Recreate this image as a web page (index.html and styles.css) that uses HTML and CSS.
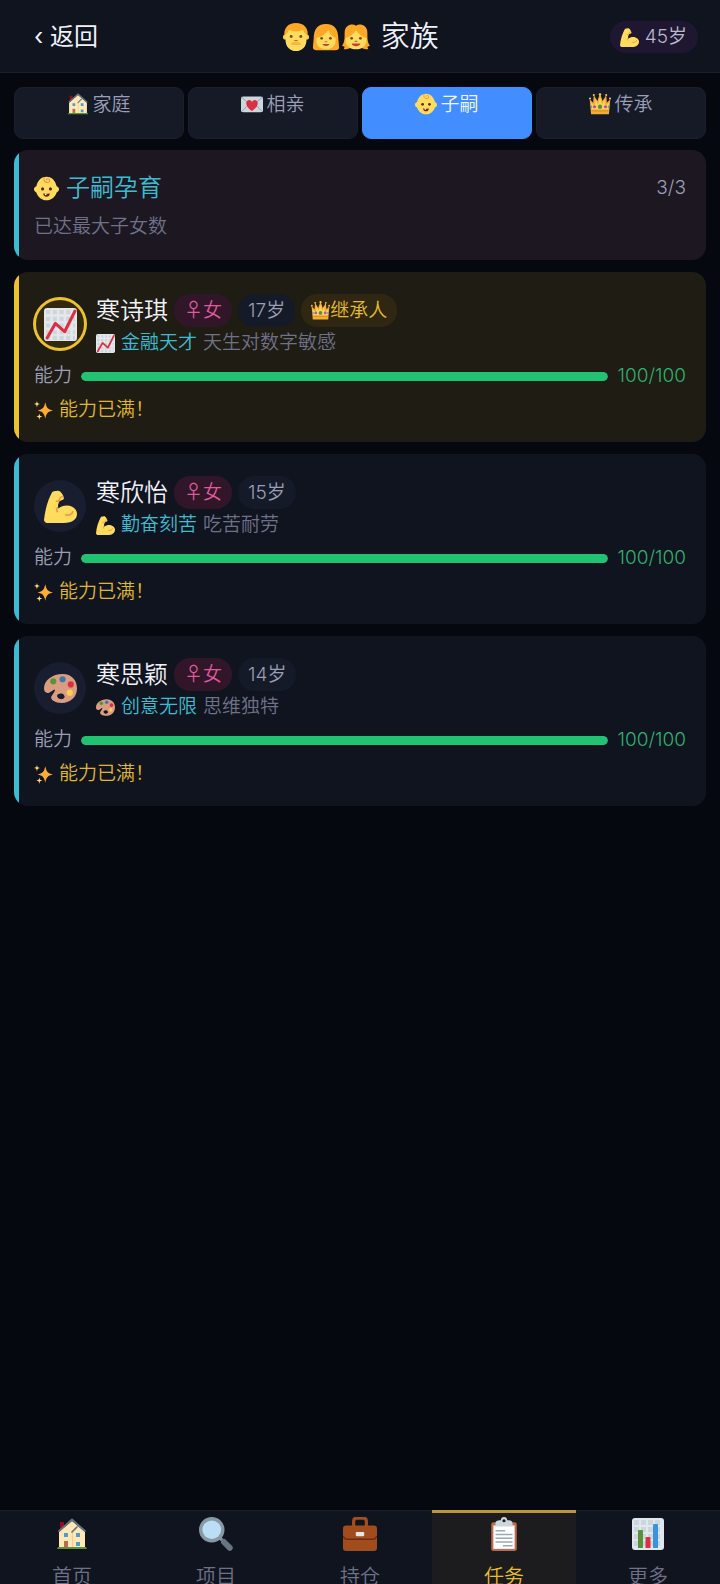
FILE: index.html
```html
<!DOCTYPE html>
<html lang="zh-CN">
<head>
<meta charset="utf-8">
<meta name="viewport" content="width=device-width, initial-scale=1">
<title>家族</title>
<link rel="stylesheet" href="styles.css">
</head>
<body>
<svg class="sprite" aria-hidden="true">
  <symbol id="man" viewBox="0 0 32 32">
    <path fill="#ffa726" d="M3 16C1 6 7 0 16 0s15 6 13 16z"/>
    <ellipse cx="3.500" cy="16" rx="2.500" ry="3" fill="#ffcc4d"/><ellipse cx="28.500" cy="16" rx="2.500" ry="3" fill="#ffcc4d"/>
    <path fill="#ffdc5d" d="M4 13c2-1 3-3 4-5 4 2 12 2 16 0 1 2 2 4 4 5v6c0 8-5 13-12 13S4 27 4 19z"/>
    <circle cx="10.500" cy="15.500" r="1.700" fill="#7a4a1d"/><circle cx="21.500" cy="15.500" r="1.700" fill="#7a4a1d"/>
    <path fill="none" stroke="#c1694f" stroke-width="1.400" stroke-linecap="round" d="M14.500 20h3"/>
    <path fill="#ffb545" d="M16 21.500c3-1 5 1 6 3-3 1-9 1-12 0 1-2 3-4 6-3z"/>
  </symbol>
  <symbol id="woman" viewBox="0 0 32 32">
    <path fill="#ffa726" d="M16 1C6 1 2 8 2 17l-1 11c0 2 2 3 4 3h22c2 0 4-1 4-3l-1-11C30 8 26 1 16 1z"/>
    <path fill="#ffdc5d" d="M5 17c6-1 11-5 14-9 1 5 5 8 8 9v3c0 7-5 10-11 10S5 27 5 20z"/>
    <circle cx="11" cy="17.500" r="1.600" fill="#7a4a1d"/><circle cx="21" cy="17.500" r="1.600" fill="#7a4a1d"/>
    <path fill="none" stroke="#c1694f" stroke-width="1.200" stroke-linecap="round" d="M15 21.500h2"/>
    <path fill="#c93a35" d="M12 24h8c-1 3-7 3-8 0z"/>
  </symbol>
  <symbol id="girl" viewBox="0 0 32 32">
    <path fill="#ffa726" d="M16 3C12 0 3 2 3 11c0 7 0 11-3 15l3 1-1 3c4 0 7-1 9-3h10c2 2 5 3 9 3l-1-3 3-1c-3-4-3-8-3-15 0-9-9-11-13-8z"/>
    <path fill="#ffdc5d" d="M4 17c5-1 9-4 12-9 3 5 7 8 12 9v2c0 7-5 11-12 11S4 26 4 19z"/>
    <circle cx="11" cy="17.500" r="1.600" fill="#7a4a1d"/><circle cx="21" cy="17.500" r="1.600" fill="#7a4a1d"/>
    <path fill="none" stroke="#c1694f" stroke-width="1.200" stroke-linecap="round" d="M15 21h2"/>
    <path fill="#c93a35" d="M11 23.500h10c-1 4-9 4-10 0z"/>
  </symbol>
  <symbol id="muscle" viewBox="0 0 32 32">
    <path fill="#ffdc5d" d="M12 1c2-1 4 0 5 2 1 1 3 5 2 6s-3 1-4 2c-1 2-2 4-1 7 2-2 5-3 8-3 6 0 10 4 10 8 0 5-4 9-13 9H4c-2 0-4-1-4-3C1 19 4 9 8 2c1-1 3-1 4-1z"/>
    <path fill="none" stroke="#ef9645" stroke-width="1.500" stroke-linecap="round" d="M21 24c3 1 6 0 7-3M12 11c2 0 3-1 3-2s2-2 3-3M13 17c-1 2-1 3 0 4"/>
  </symbol>
  <symbol id="house" viewBox="0 0 32 32">
    <path fill="#a0041e" d="M4 4h4v10H4z"/>
    <path fill="#ffe8b6" d="M3 14L16 3l13 11v15H3z"/>
    <path stroke="#ffcc88" stroke-width="1" d="M16.500 14v15"/>
    <path fill="none" stroke="#66757f" stroke-width="1.700" stroke-linecap="round" stroke-linejoin="round" d="M3 13L16 1.500 29 13M16 14l5-5"/>
    <path fill="#4b9ed1" d="M8 15h4v4H8zm12 0h4v4h-4zm0 9h4v4h-4z"/>
    <path fill="#c1694f" d="M8 23h4v6H8z"/>
    <path fill="#5c913b" d="M2 29h28l1 2H1z"/>
  </symbol>
  <symbol id="letter" viewBox="0 0 32 32">
    <rect y="5" width="32" height="23" rx="3" fill="#ccd6dd"/>
    <path fill="none" stroke="#8c9fac" stroke-width="1.300" d="M1 6l13 12c1 1 3 1 4 0L31 6M1 27l11-11m19 11L20 16"/>
    <path fill="#dd2e44" d="M16 26C4 18 7 10 12 10c2 0 3 1 4 3 1-2 2-3 4-3 5 0 8 8-4 16z"/>
  </symbol>
  <symbol id="baby" viewBox="0 0 32 32">
    <path fill="#ffdc5d" d="M3 13C5 5 10 1 16 1s11 4 13 12c2 1 3 2 3 4s-1 3-3 4c-2 6-7 10-13 10S5 27 3 21c-2-1-3-2-3-4s1-3 3-4z"/>
    <path fill="none" stroke="#ef9645" stroke-width="1.400" stroke-linecap="round" d="M13 2c-2 7 7 8 7 4 0-3-4-3-4-1"/>
    <circle cx="11" cy="16.500" r="2" fill="#662113"/><circle cx="21" cy="16.500" r="2" fill="#662113"/>
    <path fill="#662113" d="M12 22c2 1 6 1 8 0 1 6-9 6-8 0z"/><path fill="#fff" d="M14 22.500h2v2h-2z"/>
  </symbol>
  <symbol id="crown" viewBox="0 0 32 32">
    <path fill="#f4ad35" d="M3 31L1 9l5 5 1-11 5 9 4-11 4 11 5-9 1 11 5-5-2 22z"/>
    <path fill="#ffd25c" d="M4 24L3 14l5 5 2-11 3 9 3-11 3 11 3-9 2 11 5-5-1 10z"/>
    <g fill="#ffcc4d"><circle cx="1.500" cy="8" r="1.500"/><circle cx="7" cy="3" r="1.500"/><circle cx="16" cy="2" r="1.800"/><circle cx="25" cy="3" r="1.500"/><circle cx="30.500" cy="8" r="1.500"/></g>
    <circle cx="16" cy="20" r="3.200" fill="#5c913b"/><circle cx="8" cy="20" r="2.200" fill="#b34bb3"/><circle cx="24" cy="20" r="2.200" fill="#b34bb3"/>
    <circle cx="3.500" cy="20" r="1.300" fill="#4c8edb"/><circle cx="28.500" cy="20" r="1.300" fill="#4c8edb"/>
    <path stroke="#d98c24" stroke-width="1.500" d="M4 26h24"/>
  </symbol>
  <symbol id="chart" viewBox="0 0 32 32">
    <rect width="32" height="32" rx="3" fill="#e4e8eb"/>
    <path stroke="#ccd6dd" stroke-width="4" stroke-dasharray="4 2.500" d="M2 4h28M2 10.500h28M2 17h28M2 23.500h28M2 29h28"/>
    <path fill="none" stroke="#dd2e44" stroke-width="3" stroke-linecap="round" stroke-linejoin="round" d="M3 29l8-14 9 8L30 3"/>
  </symbol>
  <symbol id="palette" viewBox="0 0 32 32">
    <path fill="#d99e82" fill-rule="evenodd" d="M18 2C8 2 0 8 0 16c0 3 2 5 5 4l5-3c2 0-1 4-3 7-1 3 4 6 10 6 9 0 15-6 15-14S27 2 18 2zm-3 19c3-1 5 1 5 3s-3 3-5 2-4-4 0-5z"/>
    <circle cx="9" cy="9" r="3" fill="#5c913b"/><circle cx="18" cy="7" r="3" fill="#3b78b0"/><circle cx="26" cy="12" r="3" fill="#dd2e44"/><circle cx="25" cy="20" r="3" fill="#ffcc4d"/>
  </symbol>
  <symbol id="sparkle" viewBox="0 0 32 32">
    <path fill="#ffac33" d="M19 2c2 9 4 12 13 14-9 2-11 4-13 14-2-10-4-12-13-14 9-2 11-5 13-14z"/>
    <path fill="#ffd983" d="M5 0c1 4 1 4 5 5-4 1-4 1-5 6-1-5-1-5-5-6 4-1 4-1 5-5zm4 21c1 4 1 4 5 5-4 1-4 1-5 6-1-5-1-5-5-6 4-1 4-1 5-5z"/>
  </symbol>
  <symbol id="search" viewBox="0 0 32 32">
    <path stroke="#7f8f99" stroke-width="3" d="M19 19l5 5"/>
    <path stroke="#66757f" stroke-width="5.500" stroke-linecap="round" d="M23.500 23.500L29 29"/>
    <circle cx="12" cy="12" r="12" fill="#8899a6"/><circle cx="12" cy="12" r="8.800" fill="#bbddf5"/>
  </symbol>
  <symbol id="briefcase" viewBox="0 0 32 32">
    <path fill="none" stroke="#a34e1c" stroke-width="3" d="M10 9V4c0-2 1-3 3-3h6c2 0 3 1 3 3v5"/>
    <rect y="8" width="32" height="24" rx="3" fill="#a14c1c"/>
    <path fill="none" stroke="#722a0e" stroke-width="1.500" d="M0 18c1 2 2 3 4 3h24c2 0 3-1 4-3"/>
    <rect x="12" y="14" width="8" height="4" rx="1" fill="#e1e8ed"/>
  </symbol>
  <symbol id="clipboard" viewBox="0 0 32 32">
    <rect x="4" y="5" width="24" height="27" rx="2" fill="#c1694f"/>
    <path fill="#fff" d="M6 8h20v22H6z"/>
    <path fill="#ccd6dd" fill-rule="evenodd" d="M8 9V6c0-2 1-3 5-3 0-4 6-4 6 0 4 0 5 1 5 3v3zm8-7a1.500 1.500 0 100 3 1.500 1.500 0 000-3z"/>
    <path stroke="#99aab5" stroke-width="1.500" d="M8 13h9m-9 3.500h16M8 20h16M8 23.500h16M15 27h9"/>
  </symbol>
  <symbol id="bars" viewBox="0 0 32 32">
    <rect width="32" height="32" rx="3" fill="#e1e8ed"/>
    <path stroke="#ccd6dd" stroke-width="5" stroke-dasharray="5 2" d="M2 4.500h28M2 11.500h28M2 18.500h28M2 25.500h28"/>
    <path fill="#5c913b" d="M6 13q0-1 1-1h3q1 0 1 1v17H6z"/><path fill="#dd2e44" d="M13.500 20q0-1 1-1h3q1 0 1 1v10h-5z"/><path fill="#3b94d9" d="M21 7q0-1 1-1h3q1 0 1 1v23h-5z"/>
  </symbol>
</svg>

<div class="app">
  <header class="header">
    <button class="back" type="button">‹ 返回</button>
    <h1 class="title">
      <span class="family"><svg class="face"><use href="#man"/></svg><svg class="face"><use href="#woman"/></svg><svg class="face"><use href="#girl"/></svg></span>
      家族
    </h1>
    <span class="age"><svg class="icon"><use href="#muscle"/></svg>45岁</span>
  </header>

  <div class="tabs">
    <button class="tab" type="button"><svg class="tab-icon"><use href="#house"/></svg>家庭</button>
    <button class="tab" type="button"><svg class="tab-icon"><use href="#letter"/></svg>相亲</button>
    <button class="tab tab-active" type="button"><svg class="tab-icon"><use href="#baby"/></svg>子嗣</button>
    <button class="tab" type="button"><svg class="tab-icon"><use href="#crown"/></svg>传承</button>
  </div>

  <main class="list">
    <section class="card card-birth">
      <div class="birth-head">
        <h2 class="birth-title"><svg class="birth-icon"><use href="#baby"/></svg>子嗣孕育</h2>
        <span class="count">3/3</span>
      </div>
      <p class="birth-note">已达最大子女数</p>
    </section>

    <article class="card card-heir">
      <div class="person">
        <span class="avatar avatar-heir"><svg class="avatar-icon"><use href="#chart"/></svg></span>
        <div class="info">
          <div class="name-row"><h3 class="name">寒诗琪</h3><span class="pill pill-female">♀女</span><span class="pill">17岁</span><span class="pill pill-heir"><svg class="icon"><use href="#crown"/></svg>继承人</span></div>
          <p class="trait"><svg class="icon"><use href="#chart"/></svg><span class="trait-name">金融天才</span><span>天生对数字敏感</span></p>
        </div>
      </div>
      <div class="ability"><span>能力</span><div class="track"><div class="fill" style="width:100%"></div></div><span class="score">100/100</span></div>
      <p class="full"><svg class="icon"><use href="#sparkle"/></svg>能力已满！</p>
    </article>

    <article class="card">
      <div class="person">
        <span class="avatar"><svg class="avatar-icon"><use href="#muscle"/></svg></span>
        <div class="info">
          <div class="name-row"><h3 class="name">寒欣怡</h3><span class="pill pill-female">♀女</span><span class="pill">15岁</span></div>
          <p class="trait"><svg class="icon"><use href="#muscle"/></svg><span class="trait-name">勤奋刻苦</span><span>吃苦耐劳</span></p>
        </div>
      </div>
      <div class="ability"><span>能力</span><div class="track"><div class="fill" style="width:100%"></div></div><span class="score">100/100</span></div>
      <p class="full"><svg class="icon"><use href="#sparkle"/></svg>能力已满！</p>
    </article>

    <article class="card">
      <div class="person">
        <span class="avatar"><svg class="avatar-icon"><use href="#palette"/></svg></span>
        <div class="info">
          <div class="name-row"><h3 class="name">寒思颖</h3><span class="pill pill-female">♀女</span><span class="pill">14岁</span></div>
          <p class="trait"><svg class="icon"><use href="#palette"/></svg><span class="trait-name">创意无限</span><span>思维独特</span></p>
        </div>
      </div>
      <div class="ability"><span>能力</span><div class="track"><div class="fill" style="width:100%"></div></div><span class="score">100/100</span></div>
      <p class="full"><svg class="icon"><use href="#sparkle"/></svg>能力已满！</p>
    </article>
  </main>

  <nav class="nav">
    <a class="nav-item" href="#home"><svg class="nav-icon"><use href="#house"/></svg>首页</a>
    <a class="nav-item" href="#projects"><svg class="nav-icon nav-icon-large"><use href="#search"/></svg>项目</a>
    <a class="nav-item" href="#holdings"><svg class="nav-icon nav-icon-large"><use href="#briefcase"/></svg>持仓</a>
    <a class="nav-item nav-active" href="#tasks"><svg class="nav-icon nav-icon-large"><use href="#clipboard"/></svg>任务</a>
    <a class="nav-item" href="#more"><svg class="nav-icon"><use href="#bars"/></svg>更多</a>
  </nav>
</div>
</body>
</html>
```

FILE: styles.css
```css
* { box-sizing: border-box; }
body {
  margin: 0;
  background: #05080f;
  color: #f0f2fa;
  font: 350 19px/24px Inter, "Noto Sans CJK SC", sans-serif;
}
h1, h2, h3, p { margin: 0; font-weight: inherit; }
button { border: 0; font: inherit; color: inherit; }
svg { display: block; flex: none; }
.sprite { position: absolute; width: 0; height: 0; }
.app { display: flex; flex-direction: column; height: 100vh; overflow: hidden; }

.header {
  display: flex;
  justify-content: space-between;
  align-items: center;
  height: 73px;
  flex: none;
  padding: 2px 22px 0 34px;
  background: #10141f;
  border-bottom: 1px solid #1b1f2a;
}
.back { padding: 0 12px 0 0; background: none; font-size: 24px; line-height: 32px; font-weight: 400; }
.title { display: flex; align-items: center; gap: 10px; font-size: 29px; line-height: 40px; }
.family { display: flex; }
.face { width: 30px; height: 30px; padding: 0 1px; }
.age {
  display: flex;
  align-items: center;
  gap: 6px;
  padding: 4px 11px 4px 10px;
  border-radius: 16px;
  background: #1f1731;
  color: #b8bace;
}
.icon { width: 19px; height: 19px; }

.tabs { display: flex; gap: 4px; padding: 14px 14px 11px; flex: none; }
.tab {
  flex: 1;
  display: flex;
  justify-content: center;
  align-items: flex-start;
  gap: 3px;
  height: 52px;
  padding: 5px 0;
  border: 1px solid #1a1f2b;
  border-radius: 9px;
  background: #151a26;
  color: #9c9eb6;
}
.tab-icon { width: 22px; height: 22px; }
.tab-active { background: #428dff; border-color: #428dff; color: #f4f7ff; }

.list { flex: 1; display: flex; flex-direction: column; gap: 12px; padding: 0 14px; min-height: 0; overflow: hidden; }
.card {
  --accent: #3cbcd2;
  --surface: #10141f;
  flex: none;
  padding: 22px 20px 15px;
  border-radius: 14px;
  background: linear-gradient(to right, var(--accent) 5px, var(--surface) 5px);
}
.card-birth { --surface: #1d1721; padding-bottom: 21px; }
.card-heir { --surface: #1f1c14; --accent: #ecc22f; }
.birth-head { display: flex; justify-content: space-between; align-items: center; }
.birth-title { display: flex; align-items: center; gap: 7px; font-size: 24px; line-height: 32px; color: #3cbcd2; }
.birth-icon { width: 25px; height: 25px; }
.count { color: #9c9eb6; }
.birth-note { padding: 11px 0 0; color: #6f7189; }

.person { display: flex; align-items: flex-start; gap: 10px; }
.avatar { display: grid; place-items: center; flex: none; width: 52px; height: 52px; margin-top: 4px; border-radius: 50%; background: #191d30; }
.avatar-heir { background: #33290f; border: 2px solid #ecc22f; box-shadow: 0 0 0 1px #ecc22f; }
.avatar-icon { width: 33px; height: 33px; }
.name-row { display: flex; align-items: center; gap: 6px; }
.name { font-size: 24px; line-height: 33px; }
.pill { display: flex; align-items: center; height: 33px; padding: 0 10px; border-radius: 16px; background: #151a28; color: #9c9eb6; }
.pill-female { background: #311629; color: #df5a9c; }
.pill-heir { background: #302712; color: #e6bd2f; }
.trait { display: flex; align-items: center; gap: 6px; line-height: 32px; color: #6f7189; }
.trait-name { color: #3cbcd2; }
.ability { display: flex; align-items: center; gap: 9px; height: 34px; color: #9c9eb6; }
.track { flex: 1; height: 9px; border-radius: 5px; background: #1d2230; overflow: hidden; }
.fill { height: 100%; border-radius: 5px; background: #21c373; }
.score { color: #2fb071; }
.full { display: flex; align-items: center; gap: 6px; height: 34px; color: #e1b72d; }

.nav { display: flex; flex: none; height: 74px; overflow: hidden; background: #10141f; }
.nav-item {
  flex: 1;
  display: flex;
  flex-direction: column;
  align-items: center;
  border-top: 1px solid #1b1f2a;
  padding-top: 7px;
  gap: 16px;
  font-size: 20px;
  line-height: 22px;
  color: #6f7189;
  text-decoration: none;
}
.nav-icon { width: 32px; height: 32px; }
.nav-icon-large { width: 34px; height: 34px; margin: -1px; }
.nav-active { border-top: 3px solid #bd9638; padding-top: 5px; background: #1c1c1e; color: #e6bd2f; }
```
